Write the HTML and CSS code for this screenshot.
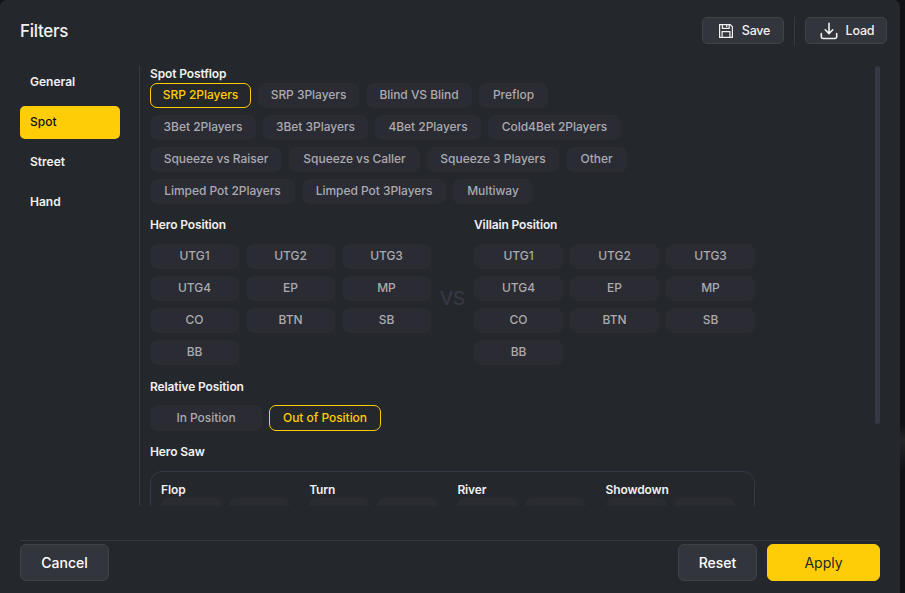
FILE: index.html
```html
<!DOCTYPE html>
<html lang="en">
<head>
    <meta charset="UTF-8">
    <meta name="viewport" content="width=device-width, initial-scale=1.0">
    <title>Filters</title>
    <link rel="stylesheet" href="styles.css">
</head>
<body>
    <div class="modal">
        <header class="modal-header">
            <h1 class="modal-title">Filters</h1>
            <div class="header-actions">
                <button class="btn btn-small">
                    <svg width="16" height="16" viewBox="0 0 16 16" fill="none" stroke="currentColor" stroke-width="1.2">
                        <path d="M1.6 1.6h10.6l2.2 2.2v10.6H1.6z"/>
                        <path d="M4.4 1.6v3.8h6.8V1.6M8.7 2v2"/>
                        <path d="M4.1 14.4V8.6h7.8v5.8"/>
                    </svg>
                    <span>Save</span>
                </button>
                <span class="header-divider"></span>
                <button class="btn btn-small">
                    <svg width="18" height="18" viewBox="0 0 18 18" fill="none" stroke="currentColor" stroke-width="1.6" stroke-linecap="round" stroke-linejoin="round">
                        <path d="M9 1.3v10M5.2 7.8L9 11.6l3.8-3.8"/>
                        <path d="M1.3 11.5v3q0 2 2 2h11.4q2 0 2-2v-3"/>
                    </svg>
                    <span>Load</span>
                </button>
            </div>
        </header>

        <div class="modal-body">
            <nav class="tabs">
                <a class="tab">General</a>
                <a class="tab active">Spot</a>
                <a class="tab">Street</a>
                <a class="tab">Hand</a>
            </nav>

            <div class="content">
                <h2 class="label label-spot">Spot Postflop</h2>
                <div class="spots">
                    <div class="row">
                        <button class="pill w-101 selected">SRP 2Players</button>
                        <button class="pill w-101">SRP 3Players</button>
                        <button class="pill w-106">Blind VS Blind</button>
                        <button class="pill w-69">Preflop</button>
                    </div>
                    <div class="row">
                        <button class="pill w-106">3Bet 2Players</button>
                        <button class="pill w-105">3Bet 3Players</button>
                        <button class="pill w-106">4Bet 2Players</button>
                        <button class="pill w-133">Cold4Bet 2Players</button>
                    </div>
                    <div class="row">
                        <button class="pill w-132">Squeeze vs Raiser</button>
                        <button class="pill w-131">Squeeze vs Caller</button>
                        <button class="pill w-132">Squeeze 3 Players</button>
                        <button class="pill w-61">Other</button>
                    </div>
                    <div class="row">
                        <button class="pill w-145">Limped Pot 2Players</button>
                        <button class="pill w-144">Limped Pot 3Players</button>
                        <button class="pill w-80">Multiway</button>
                    </div>
                </div>

                <div class="positions">
                    <section class="position">
                        <h2 class="label">Hero Position</h2>
                        <div class="position-grid">
                            <button class="pill">UTG1</button>
                            <button class="pill">UTG2</button>
                            <button class="pill">UTG3</button>
                            <button class="pill">UTG4</button>
                            <button class="pill">EP</button>
                            <button class="pill">MP</button>
                            <button class="pill">CO</button>
                            <button class="pill">BTN</button>
                            <button class="pill">SB</button>
                            <button class="pill">BB</button>
                        </div>
                    </section>
                    <div class="versus">VS</div>
                    <section class="position">
                        <h2 class="label">Villain Position</h2>
                        <div class="position-grid">
                            <button class="pill">UTG1</button>
                            <button class="pill">UTG2</button>
                            <button class="pill">UTG3</button>
                            <button class="pill">UTG4</button>
                            <button class="pill">EP</button>
                            <button class="pill">MP</button>
                            <button class="pill">CO</button>
                            <button class="pill">BTN</button>
                            <button class="pill">SB</button>
                            <button class="pill">BB</button>
                        </div>
                    </section>
                </div>

                <h2 class="label label-relative">Relative Position</h2>
                <div class="row row-relative">
                    <button class="pill">In Position</button>
                    <button class="pill selected">Out of Position</button>
                </div>

                <h2 class="label label-saw">Hero Saw</h2>
                <div class="saw">
                    <div class="saw-group">
                        <h3 class="label">Flop</h3>
                        <div class="row"><button class="pill"></button><button class="pill"></button></div>
                    </div>
                    <div class="saw-group">
                        <h3 class="label">Turn</h3>
                        <div class="row"><button class="pill"></button><button class="pill"></button></div>
                    </div>
                    <div class="saw-group">
                        <h3 class="label">River</h3>
                        <div class="row"><button class="pill"></button><button class="pill"></button></div>
                    </div>
                    <div class="saw-group">
                        <h3 class="label">Showdown</h3>
                        <div class="row"><button class="pill"></button><button class="pill"></button></div>
                    </div>
                </div>
            </div>
            <div class="scrollbar"></div>
        </div>

        <footer class="modal-footer">
            <button class="btn btn-cancel">Cancel</button>
            <button class="btn btn-reset">Reset</button>
            <button class="btn btn-apply">Apply</button>
        </footer>
    </div>
</body>
</html>
```
FILE: styles.css
```css
:root {
    --bg: #24272b;
    --pill: #2b2b33;
    --button: #33353d;
    --line: #363845;
    --yellow: #ffcd07;
    --text: #f0f0f1;
    --muted: #aaaaaf;
}
* {
    box-sizing: border-box;
}
body {
    margin: 0;
    height: 593px;
    overflow: hidden;
    background: linear-gradient(#111215 0, #111215 425px, #242527 440px, #111215 470px);
    color: var(--text);
    font-family: Inter, "Open Sans", sans-serif;
    font-size: 12px;
}
h1, h2, h3 {
    margin: 0;
}
button {
    font-family: inherit;
    padding: 0;
    margin: 0;
}
.modal {
    width: 900px;
    height: 593px;
    background: var(--bg);
    border-radius: 6px 6px 0 0;
    display: flex;
    flex-direction: column;
}
.modal-header {
    display: flex;
    justify-content: space-between;
    height: 66px;
    padding: 17px 13px 0 20px;
}
.modal-title {
    font-size: 17px;
    font-weight: 500;
    line-height: 28px;
    letter-spacing: -0.3px;
}
.header-actions {
    display: flex;
    gap: 10px;
}
.header-divider {
    width: 1px;
    height: 29px;
    background: var(--line);
}
.btn {
    display: flex;
    align-items: center;
    justify-content: center;
    background: var(--button);
    border: 1px solid #424244;
    border-radius: 6px;
    color: #fff;
    font-size: 14px;
    font-weight: 500;
    height: 37px;
    padding-bottom: 1px;
}
.btn-small {
    width: 82px;
    height: 27px;
    border-radius: 5px;
    gap: 8px;
    padding: 0 0 0 2px;
    font-size: 12.5px;
    letter-spacing: -0.2px;
    color: var(--text);
}
.btn-small svg {
    margin-top: 1px;
}
.btn-small span {
    margin-top: -1px;
}
.modal-body {
    display: flex;
    height: 440px;
}
.tabs {
    width: 140px;
    padding: 0 19px 0 20px;
    border-right: 1px solid var(--line);
    display: flex;
    flex-direction: column;
    gap: 7px;
}
.tab {
    height: 33px;
    line-height: 32px;
    padding-left: 10px;
    border-radius: 5px;
    font-weight: 600;
}
.tab.active {
    background: var(--yellow);
    color: #111;
    font-weight: 500;
}
.content {
    width: 735px;
    padding-left: 10px;
    overflow: hidden;
}
.scrollbar {
    width: 5px;
    height: 358px;
    border-radius: 3px;
    background: var(--line);
}
.label {
    font-size: 12px;
    font-weight: 600;
    line-height: 17px;
    letter-spacing: -0.12px;
}
.label-spot {
    line-height: 15px;
    margin-bottom: 2px;
}
.row {
    display: flex;
    gap: 7px;
}
.spots {
    display: flex;
    flex-direction: column;
    gap: 7px;
}
.pill {
    height: 25px;
    padding-bottom: 2px;
    border: 1px solid transparent;
    border-radius: 7px;
    background: var(--pill);
    color: var(--muted);
    font-size: 12px;
    font-weight: 500;
    letter-spacing: -0.04px;
    white-space: nowrap;
}
.pill.selected {
    background: transparent;
    border-color: var(--yellow);
    color: var(--yellow);
}
.w-61 { width: 61px; }
.w-69 { width: 69px; }
.w-80 { width: 80px; }
.w-101 { width: 101px; }
.w-105 { width: 105px; }
.w-106 { width: 106px; }
.w-131 { width: 131px; }
.w-132 { width: 132px; }
.w-133 { width: 133px; }
.w-144 { width: 144px; }
.w-145 { width: 145px; }
.positions {
    display: flex;
    margin-top: 12px;
}
.position-grid {
    display: grid;
    grid-template-columns: repeat(3, 89px);
    gap: 7px;
    margin-top: 11px;
}
.versus {
    width: 43px;
    padding-top: 71px;
    line-height: 24px;
    text-align: center;
    font-size: 19px;
    font-weight: 500;
    color: var(--line);
}
.label-relative {
    margin-top: 13px;
}
.row-relative {
    margin-top: 10px;
}
.row-relative .pill {
    width: 112px;
    height: 26px;
}
.label-saw {
    margin-top: 12px;
}
.saw {
    display: flex;
    width: 605px;
    height: 70px;
    margin-top: 11px;
    padding: 9px 10px;
    border: 1px solid var(--line);
    border-radius: 12px;
}
.saw-group {
    flex: 0 0 148.2px;
}
.saw-group .pill {
    width: 61px;
}
.modal-footer {
    display: flex;
    gap: 10px;
    margin: 34px 20px 0;
    padding-top: 3px;
    border-top: 1px solid var(--line);
}
.btn-cancel {
    width: 89px;
    margin-right: auto;
}
.btn-reset {
    width: 79px;
}
.btn-apply {
    width: 113px;
    background: var(--yellow);
    border-color: var(--yellow);
    color: #24272b;
    font-weight: 400;
}
```
